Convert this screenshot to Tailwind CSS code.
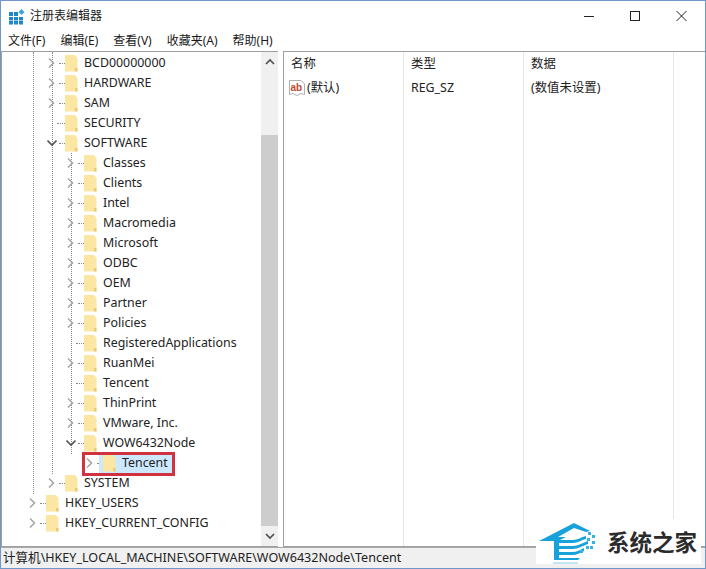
<!DOCTYPE html>
<html><head><meta charset="utf-8"><script src="https://cdn.jsdelivr.net/npm/@tailwindcss/browser@4"></script></head>
<body class="bg-white">
<div class="relative w-[706px] h-[569px] overflow-hidden bg-white border border-[#7097c9] flex flex-col text-[#1a1a1a] font-['Noto_Sans','Noto_Sans_CJK_SC',sans-serif] text-[12px]">
  <!-- title -->
  <div class="h-[30px] flex items-center shrink-0 pl-[8px]">
    <svg width="16" height="17" viewBox="0 0 16 17" class="mr-[5px]"><g fill="#1e88c9"><rect x="0" y="4" width="4" height="4"/><rect x="5" y="4" width="4" height="4"/><rect x="0" y="9" width="4" height="3.500"/><rect x="5" y="9" width="4" height="3.500"/><rect x="10" y="9" width="4" height="3.500"/><rect x="0" y="13" width="4" height="3.500"/><rect x="5" y="13" width="4" height="3.500"/><rect x="10" y="13" width="4" height="3.500"/></g><path d="M12.500 1 L15.500 4 L12.500 7 L9.500 4 Z" fill="#3aa5dc"/></svg>
    <span class="text-[12px]">注册表编辑器</span>
    <div class="ml-auto flex items-center">
      <svg width="46" height="20" viewBox="0 0 46 20"><path d="M0 10.500 H10" stroke="#222" stroke-width="1"/></svg>
      <svg width="46" height="20" viewBox="0 0 46 20"><rect x="0.500" y="5.500" width="9" height="9" fill="none" stroke="#222"/></svg>
      <svg width="29" height="20" viewBox="0 0 29 20"><path d="M0.500 5 L10.500 15 M10.500 5 L0.500 15" stroke="#222" fill="none"/></svg>
    </div>
  </div>
  <!-- menu -->
  <div class="h-[20px] flex items-center shrink-0 pl-[7px] gap-[15px] text-[12px]">
    <span>文件(F)</span><span>编辑(E)</span><span>查看(V)</span><span>收藏夹(A)</span><span>帮助(H)</span>
  </div>
  <!-- body -->
  <div class="flex h-[496px] shrink-0">
    <!-- tree -->
    <div class="relative w-[277px] border border-[#a0a0a0] border-r-0 flex text-[12.4px] text-[#222]">
      <div class="flex-1 relative">
        <div class="absolute left-[31px] top-0 h-[442px] border-l border-dotted border-[#888]"></div>
        <div class="absolute left-[50px] top-0 h-[422px] border-l border-dotted border-[#888]"></div>
        <div class="absolute left-[69px] top-[101px] h-[301px] border-l border-dotted border-[#888]"></div>
        <div class="flex flex-col relative pt-[1px]">
          <div class="flex items-center h-5 pl-[45px]"><svg width="10" height="12" viewBox="0 0 10 12"><path d="M2 1.500 L6.500 6 L2 10.500" fill="none" stroke="#a6a6a6" stroke-width="1.600"/></svg><i class="w-[6px] ml-[2px] border-t border-dotted border-[#888]"></i><svg width="13" height="17" viewBox="0 0 13 17"><path d="M0 0 H10 L12.500 3 V16.500 H0 Z" fill="#fce6a4"/><path d="M10 13 H12.500 V16.500 H10 Z" fill="#eccb74"/></svg><span class="ml-[6px]">BCD00000000</span></div>
          <div class="flex items-center h-5 pl-[45px]"><svg width="10" height="12" viewBox="0 0 10 12"><path d="M2 1.500 L6.500 6 L2 10.500" fill="none" stroke="#a6a6a6" stroke-width="1.600"/></svg><i class="w-[6px] ml-[2px] border-t border-dotted border-[#888]"></i><svg width="13" height="17" viewBox="0 0 13 17"><path d="M0 0 H10 L12.500 3 V16.500 H0 Z" fill="#fce6a4"/><path d="M10 13 H12.500 V16.500 H10 Z" fill="#eccb74"/></svg><span class="ml-[6px]">HARDWARE</span></div>
          <div class="flex items-center h-5 pl-[45px]"><svg width="10" height="12" viewBox="0 0 10 12"><path d="M2 1.500 L6.500 6 L2 10.500" fill="none" stroke="#a6a6a6" stroke-width="1.600"/></svg><i class="w-[6px] ml-[2px] border-t border-dotted border-[#888]"></i><svg width="13" height="17" viewBox="0 0 13 17"><path d="M0 0 H10 L12.500 3 V16.500 H0 Z" fill="#fce6a4"/><path d="M10 13 H12.500 V16.500 H10 Z" fill="#eccb74"/></svg><span class="ml-[6px]">SAM</span></div>
          <div class="flex items-center h-5 pl-[45px]"><span class="w-[10px]"></span><i class="w-[8px] ml-0 border-t border-dotted border-[#888]"></i><svg width="13" height="17" viewBox="0 0 13 17"><path d="M0 0 H10 L12.500 3 V16.500 H0 Z" fill="#fce6a4"/><path d="M10 13 H12.500 V16.500 H10 Z" fill="#eccb74"/></svg><span class="ml-[6px]">SECURITY</span></div>
          <div class="flex items-center h-5 pl-[45px]"><svg width="10" height="12" viewBox="0 0 10 12"><path d="M0.500 3.500 L5 8 L9.500 3.500" fill="none" stroke="#555" stroke-width="1.600"/></svg><i class="w-[6px] ml-[2px] border-t border-dotted border-[#888]"></i><svg width="13" height="17" viewBox="0 0 13 17"><path d="M0 0 H10 L12.500 3 V16.500 H0 Z" fill="#fce6a4"/><path d="M10 13 H12.500 V16.500 H10 Z" fill="#eccb74"/></svg><span class="ml-[6px]">SOFTWARE</span></div>
          <div class="flex items-center h-5 pl-[64px]"><svg width="10" height="12" viewBox="0 0 10 12"><path d="M2 1.500 L6.500 6 L2 10.500" fill="none" stroke="#a6a6a6" stroke-width="1.600"/></svg><i class="w-[6px] ml-[2px] border-t border-dotted border-[#888]"></i><svg width="13" height="17" viewBox="0 0 13 17"><path d="M0 0 H10 L12.500 3 V16.500 H0 Z" fill="#fce6a4"/><path d="M10 13 H12.500 V16.500 H10 Z" fill="#eccb74"/></svg><span class="ml-[6px]">Classes</span></div>
          <div class="flex items-center h-5 pl-[64px]"><svg width="10" height="12" viewBox="0 0 10 12"><path d="M2 1.500 L6.500 6 L2 10.500" fill="none" stroke="#a6a6a6" stroke-width="1.600"/></svg><i class="w-[6px] ml-[2px] border-t border-dotted border-[#888]"></i><svg width="13" height="17" viewBox="0 0 13 17"><path d="M0 0 H10 L12.500 3 V16.500 H0 Z" fill="#fce6a4"/><path d="M10 13 H12.500 V16.500 H10 Z" fill="#eccb74"/></svg><span class="ml-[6px]">Clients</span></div>
          <div class="flex items-center h-5 pl-[64px]"><svg width="10" height="12" viewBox="0 0 10 12"><path d="M2 1.500 L6.500 6 L2 10.500" fill="none" stroke="#a6a6a6" stroke-width="1.600"/></svg><i class="w-[6px] ml-[2px] border-t border-dotted border-[#888]"></i><svg width="13" height="17" viewBox="0 0 13 17"><path d="M0 0 H10 L12.500 3 V16.500 H0 Z" fill="#fce6a4"/><path d="M10 13 H12.500 V16.500 H10 Z" fill="#eccb74"/></svg><span class="ml-[6px]">Intel</span></div>
          <div class="flex items-center h-5 pl-[64px]"><svg width="10" height="12" viewBox="0 0 10 12"><path d="M2 1.500 L6.500 6 L2 10.500" fill="none" stroke="#a6a6a6" stroke-width="1.600"/></svg><i class="w-[6px] ml-[2px] border-t border-dotted border-[#888]"></i><svg width="13" height="17" viewBox="0 0 13 17"><path d="M0 0 H10 L12.500 3 V16.500 H0 Z" fill="#fce6a4"/><path d="M10 13 H12.500 V16.500 H10 Z" fill="#eccb74"/></svg><span class="ml-[6px]">Macromedia</span></div>
          <div class="flex items-center h-5 pl-[64px]"><svg width="10" height="12" viewBox="0 0 10 12"><path d="M2 1.500 L6.500 6 L2 10.500" fill="none" stroke="#a6a6a6" stroke-width="1.600"/></svg><i class="w-[6px] ml-[2px] border-t border-dotted border-[#888]"></i><svg width="13" height="17" viewBox="0 0 13 17"><path d="M0 0 H10 L12.500 3 V16.500 H0 Z" fill="#fce6a4"/><path d="M10 13 H12.500 V16.500 H10 Z" fill="#eccb74"/></svg><span class="ml-[6px]">Microsoft</span></div>
          <div class="flex items-center h-5 pl-[64px]"><svg width="10" height="12" viewBox="0 0 10 12"><path d="M2 1.500 L6.500 6 L2 10.500" fill="none" stroke="#a6a6a6" stroke-width="1.600"/></svg><i class="w-[6px] ml-[2px] border-t border-dotted border-[#888]"></i><svg width="13" height="17" viewBox="0 0 13 17"><path d="M0 0 H10 L12.500 3 V16.500 H0 Z" fill="#fce6a4"/><path d="M10 13 H12.500 V16.500 H10 Z" fill="#eccb74"/></svg><span class="ml-[6px]">ODBC</span></div>
          <div class="flex items-center h-5 pl-[64px]"><svg width="10" height="12" viewBox="0 0 10 12"><path d="M2 1.500 L6.500 6 L2 10.500" fill="none" stroke="#a6a6a6" stroke-width="1.600"/></svg><i class="w-[6px] ml-[2px] border-t border-dotted border-[#888]"></i><svg width="13" height="17" viewBox="0 0 13 17"><path d="M0 0 H10 L12.500 3 V16.500 H0 Z" fill="#fce6a4"/><path d="M10 13 H12.500 V16.500 H10 Z" fill="#eccb74"/></svg><span class="ml-[6px]">OEM</span></div>
          <div class="flex items-center h-5 pl-[64px]"><svg width="10" height="12" viewBox="0 0 10 12"><path d="M2 1.500 L6.500 6 L2 10.500" fill="none" stroke="#a6a6a6" stroke-width="1.600"/></svg><i class="w-[6px] ml-[2px] border-t border-dotted border-[#888]"></i><svg width="13" height="17" viewBox="0 0 13 17"><path d="M0 0 H10 L12.500 3 V16.500 H0 Z" fill="#fce6a4"/><path d="M10 13 H12.500 V16.500 H10 Z" fill="#eccb74"/></svg><span class="ml-[6px]">Partner</span></div>
          <div class="flex items-center h-5 pl-[64px]"><svg width="10" height="12" viewBox="0 0 10 12"><path d="M2 1.500 L6.500 6 L2 10.500" fill="none" stroke="#a6a6a6" stroke-width="1.600"/></svg><i class="w-[6px] ml-[2px] border-t border-dotted border-[#888]"></i><svg width="13" height="17" viewBox="0 0 13 17"><path d="M0 0 H10 L12.500 3 V16.500 H0 Z" fill="#fce6a4"/><path d="M10 13 H12.500 V16.500 H10 Z" fill="#eccb74"/></svg><span class="ml-[6px]">Policies</span></div>
          <div class="flex items-center h-5 pl-[64px]"><span class="w-[10px]"></span><i class="w-[8px] border-t border-dotted border-[#888]"></i><svg width="13" height="17" viewBox="0 0 13 17"><path d="M0 0 H10 L12.500 3 V16.500 H0 Z" fill="#fce6a4"/><path d="M10 13 H12.500 V16.500 H10 Z" fill="#eccb74"/></svg><span class="ml-[6px]">RegisteredApplications</span></div>
          <div class="flex items-center h-5 pl-[64px]"><svg width="10" height="12" viewBox="0 0 10 12"><path d="M2 1.500 L6.500 6 L2 10.500" fill="none" stroke="#a6a6a6" stroke-width="1.600"/></svg><i class="w-[6px] ml-[2px] border-t border-dotted border-[#888]"></i><svg width="13" height="17" viewBox="0 0 13 17"><path d="M0 0 H10 L12.500 3 V16.500 H0 Z" fill="#fce6a4"/><path d="M10 13 H12.500 V16.500 H10 Z" fill="#eccb74"/></svg><span class="ml-[6px]">RuanMei</span></div>
          <div class="flex items-center h-5 pl-[64px]"><span class="w-[10px]"></span><i class="w-[8px] border-t border-dotted border-[#888]"></i><svg width="13" height="17" viewBox="0 0 13 17"><path d="M0 0 H10 L12.500 3 V16.500 H0 Z" fill="#fce6a4"/><path d="M10 13 H12.500 V16.500 H10 Z" fill="#eccb74"/></svg><span class="ml-[6px]">Tencent</span></div>
          <div class="flex items-center h-5 pl-[64px]"><svg width="10" height="12" viewBox="0 0 10 12"><path d="M2 1.500 L6.500 6 L2 10.500" fill="none" stroke="#a6a6a6" stroke-width="1.600"/></svg><i class="w-[6px] ml-[2px] border-t border-dotted border-[#888]"></i><svg width="13" height="17" viewBox="0 0 13 17"><path d="M0 0 H10 L12.500 3 V16.500 H0 Z" fill="#fce6a4"/><path d="M10 13 H12.500 V16.500 H10 Z" fill="#eccb74"/></svg><span class="ml-[6px]">ThinPrint</span></div>
          <div class="flex items-center h-5 pl-[64px]"><svg width="10" height="12" viewBox="0 0 10 12"><path d="M2 1.500 L6.500 6 L2 10.500" fill="none" stroke="#a6a6a6" stroke-width="1.600"/></svg><i class="w-[6px] ml-[2px] border-t border-dotted border-[#888]"></i><svg width="13" height="17" viewBox="0 0 13 17"><path d="M0 0 H10 L12.500 3 V16.500 H0 Z" fill="#fce6a4"/><path d="M10 13 H12.500 V16.500 H10 Z" fill="#eccb74"/></svg><span class="ml-[6px]">VMware, Inc.</span></div>
          <div class="flex items-center h-5 pl-[64px]"><svg width="10" height="12" viewBox="0 0 10 12"><path d="M0.500 3.500 L5 8 L9.500 3.500" fill="none" stroke="#555" stroke-width="1.600"/></svg><i class="w-[6px] ml-[2px] border-t border-dotted border-[#888]"></i><svg width="13" height="17" viewBox="0 0 13 17"><path d="M0 0 H10 L12.500 3 V16.500 H0 Z" fill="#fce6a4"/><path d="M10 13 H12.500 V16.500 H10 Z" fill="#eccb74"/></svg><span class="ml-[6px]">WOW6432Node</span></div>
          <div class="flex items-center h-5 pl-[83px]"><svg width="10" height="12" viewBox="0 0 10 12"><path d="M2 1.500 L6.500 6 L2 10.500" fill="none" stroke="#a6a6a6" stroke-width="1.600"/></svg><i class="w-[6px] ml-[2px] border-t border-dotted border-[#888]"></i><div class="flex items-center h-5 w-[75px] -ml-[4px] pl-[4px] bg-[#cce8ff]"><svg width="13" height="17" viewBox="0 0 13 17"><path d="M0 0 H10 L12.500 3 V16.500 H0 Z" fill="#fce6a4"/><path d="M10 13 H12.500 V16.500 H10 Z" fill="#eccb74"/></svg><span class="ml-[6px]">Tencent</span></div></div>
          <div class="flex items-center h-5 pl-[45px]"><svg width="10" height="12" viewBox="0 0 10 12"><path d="M2 1.500 L6.500 6 L2 10.500" fill="none" stroke="#a6a6a6" stroke-width="1.600"/></svg><i class="w-[6px] ml-[2px] border-t border-dotted border-[#888]"></i><svg width="13" height="17" viewBox="0 0 13 17"><path d="M0 0 H10 L12.500 3 V16.500 H0 Z" fill="#fce6a4"/><path d="M10 13 H12.500 V16.500 H10 Z" fill="#eccb74"/></svg><span class="ml-[6px]">SYSTEM</span></div>
          <div class="flex items-center h-5 pl-[26px]"><svg width="10" height="12" viewBox="0 0 10 12"><path d="M2 1.500 L6.500 6 L2 10.500" fill="none" stroke="#a6a6a6" stroke-width="1.600"/></svg><i class="w-[6px] ml-[2px] border-t border-dotted border-[#888]"></i><svg width="13" height="17" viewBox="0 0 13 17"><path d="M0 0 H10 L12.500 3 V16.500 H0 Z" fill="#fce6a4"/><path d="M10 13 H12.500 V16.500 H10 Z" fill="#eccb74"/></svg><span class="ml-[6px]">HKEY_USERS</span></div>
          <div class="flex items-center h-5 pl-[26px]"><svg width="10" height="12" viewBox="0 0 10 12"><path d="M2 1.500 L6.500 6 L2 10.500" fill="none" stroke="#a6a6a6" stroke-width="1.600"/></svg><i class="w-[6px] ml-[2px] border-t border-dotted border-[#888]"></i><svg width="13" height="17" viewBox="0 0 13 17"><path d="M0 0 H10 L12.500 3 V16.500 H0 Z" fill="#fce6a4"/><path d="M10 13 H12.500 V16.500 H10 Z" fill="#eccb74"/></svg><span class="ml-[6px]">HKEY_CURRENT_CONFIG</span></div>
        </div>
        <div class="absolute left-[80px] top-[400px] w-[93px] h-[24px] border-[3px] border-[#d0333f]"></div>
      </div>
      <!-- scrollbar -->
      <div class="w-[17px] bg-[#f0f0f0] flex flex-col shrink-0">
        <div class="h-[20px] flex items-center justify-center"><svg width="10" height="8" viewBox="0 0 10 8"><path d="M1 6 L5 2 L9 6" fill="none" stroke="#505050" stroke-width="1.700"/></svg></div>
        <div class="h-[63px]"></div>
        <div class="flex-1 bg-[#cdcdcd]"></div>
        <div class="h-[20px] flex items-center justify-center"><svg width="10" height="8" viewBox="0 0 10 8"><path d="M1 2 L5 6 L9 2" fill="none" stroke="#505050" stroke-width="1.700"/></svg></div>
      </div>
    </div>
    <div class="w-[5px] shrink-0"></div>
    <!-- list -->
    <div class="flex-1 border border-[#a0a0a0] border-r-0 flex text-[12.400px] text-[#222]">
      <div class="w-[120px] border-r border-[#e5e5e5] pl-[7px]">
        <div class="h-[25px] flex items-center">名称</div>
        <div class="h-[20px] flex items-center -ml-[2px] mt-[1px]"><svg width="16" height="16" viewBox="0 0 16 16" class="mr-[2px]"><path d="M0.500 0.500 H12 L15.500 4 V14.500 L12 13.500 L8 15.500 L4 13.500 L0.500 14.500 Z" fill="#fff" stroke="#b0b0b0"/><text x="1.500" y="10.500" font-size="10" font-weight="700" fill="#c0492c" font-family="Liberation Sans">ab</text></svg>(默认)</div>
      </div>
      <div class="w-[120px] border-r border-[#e5e5e5] pl-[7px]">
        <div class="h-[25px] flex items-center">类型</div>
        <div class="h-[20px] flex items-center mt-[1px]">REG_SZ</div>
      </div>
      <div class="w-[150px] border-r border-[#e5e5e5] pl-[7px]">
        <div class="h-[25px] flex items-center">数据</div>
        <div class="h-[20px] flex items-center mt-[1px]">(数值未设置)</div>
      </div>
    </div>
  </div>
  <!-- status -->
  <div class="flex-1 bg-[#f0f0f0] border-t border-[#a8a8a8] flex items-center pl-[2px] text-[12.550px] text-[#222]">计算机\HKEY_LOCAL_MACHINE\SOFTWARE\WOW6432Node\Tencent</div>
  <!-- watermark -->
  <div class="absolute left-[535px] top-[518px] w-[165px] h-[45px] bg-white flex items-center">
    <svg width="70" height="45" viewBox="0 0 70 45" class="shrink-0"><path d="M3 22 L38 4 L54 12 L50 13 L38 9 L22 18 H30 L22 22 Z" fill="#17a2dc"/><path d="M18 20 H23 V39 H44 L42 41 H18 Z" fill="#17a2dc"/><path d="M23 21 H37 C42 21 45 18 50 17 V20 C45 21 42 24 37 24 H23 Z M23 27 H37 C42 27 46 24 52 22 V25 C46 27 42 30 37 30 H23 Z M23 33 H36 C41 33 44 31 48 29 V32 C44 34 41 36 36 36 H23 Z" fill="#17a2dc"/><path d="M52 13 h3 v3 h-3 z M56 16 h3 v3 h-3 z M51 19 h3 v3 h-3 z M56 22 h3 v3 h-3 z M50 27 h3 v3 h-3 z M54 27 h3 v3 h-3 z M44 31 h3 v3 h-3 z" fill="#35b1e2"/><path d="M17 43 H42 V45 H17 Z" fill="#bfe6f5"/></svg>
    <span class="text-[22.500px] leading-none font-bold text-[#2b2b2b] ml-[1px] font-['Noto_Sans_CJK_SC',sans-serif]">系统之家</span>
  </div>
</div>
</body></html>
